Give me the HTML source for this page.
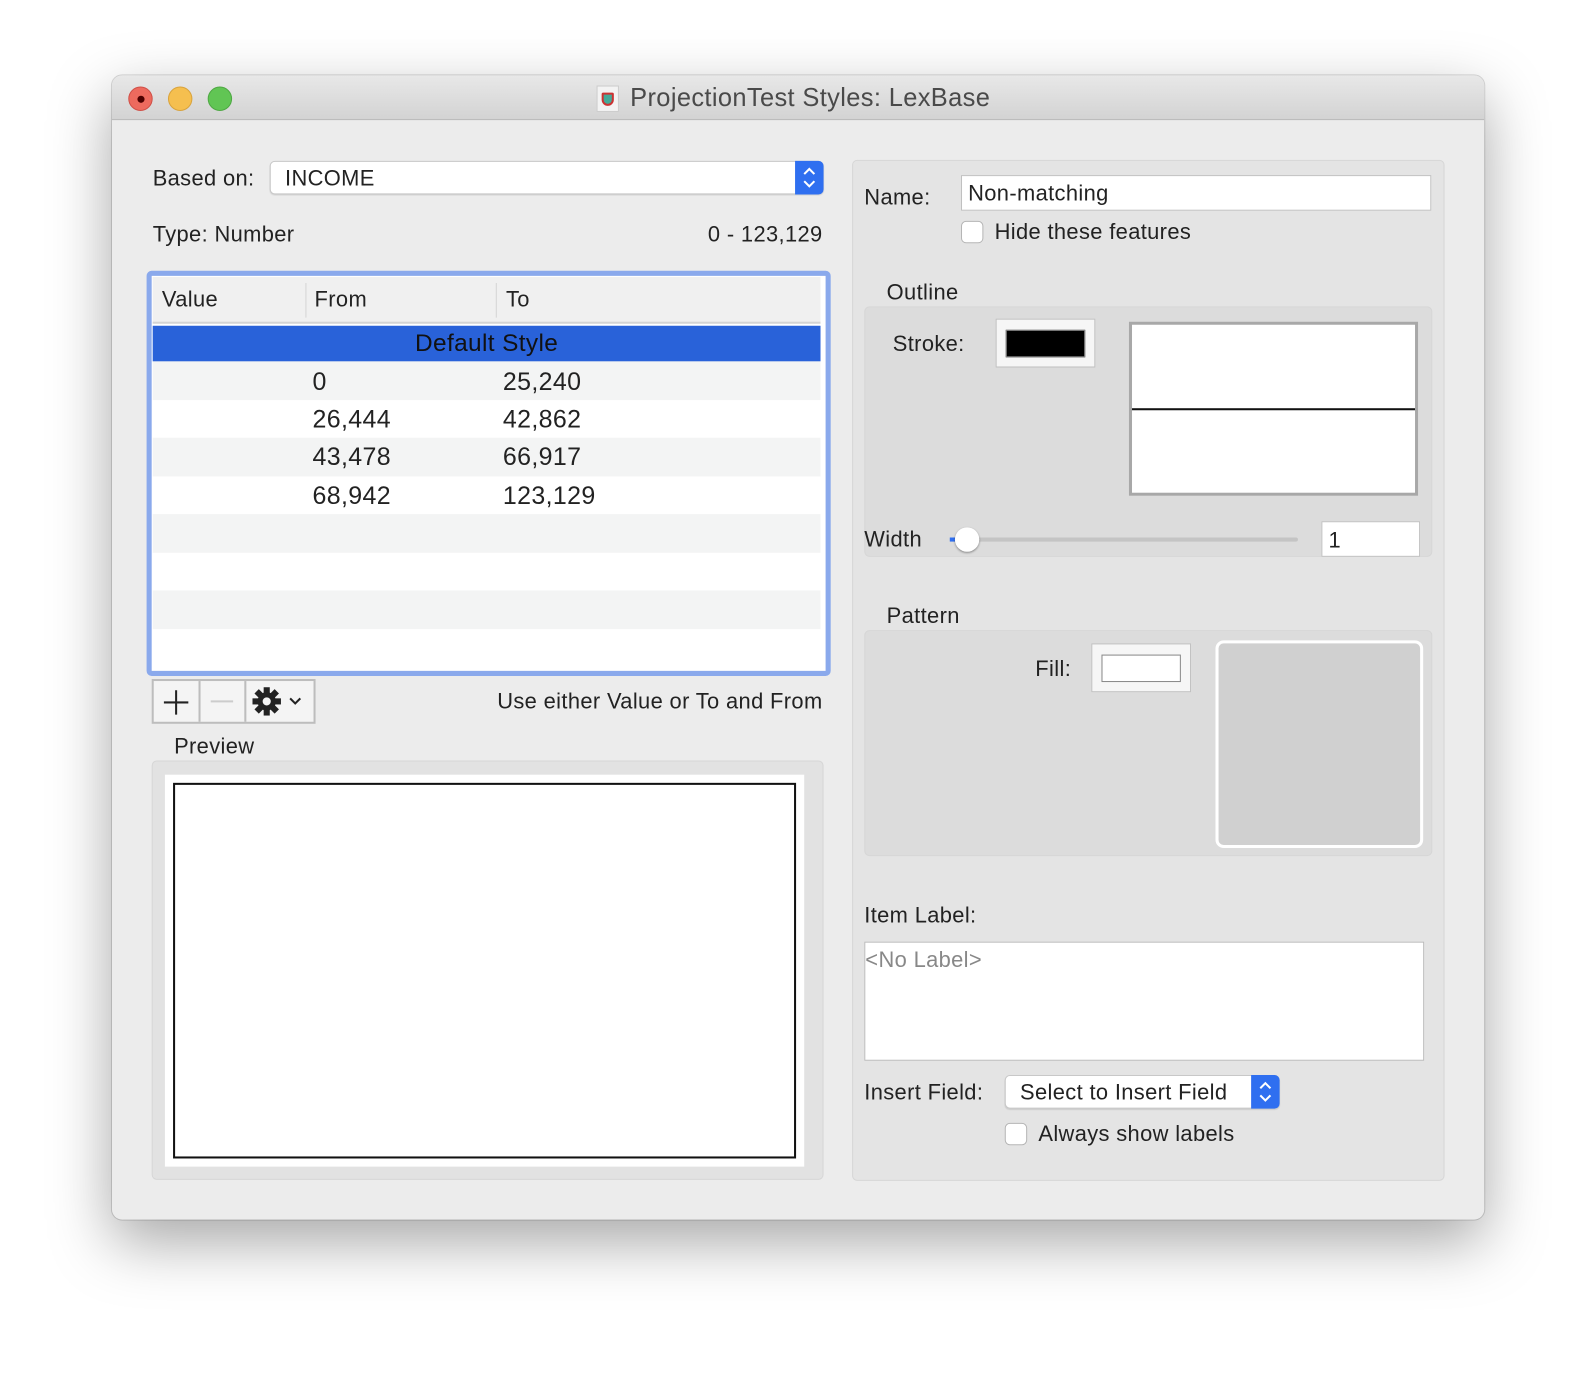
<!DOCTYPE html>
<html><head><style>
*{box-sizing:border-box;margin:0;padding:0}
body{width:1596px;height:1368px;background:#fff;font-family:"Liberation Sans",sans-serif;font-size:21.5px;letter-spacing:0.35px;color:#222;position:relative;overflow:hidden}
#wrap{position:absolute;left:0;top:0;width:1596px;height:1368px;transform:scale(1.018);transform-origin:0 0}
.a{position:absolute}
.win{left:110px;top:74px;width:1348px;height:1124px;background:#ececec;border-radius:10px;box-shadow:0 22px 60px rgba(0,0,0,.35),0 0 0 1px rgba(0,0,0,.15);overflow:hidden}
.tb{left:0;top:0;width:100%;height:44px;background:linear-gradient(#e8e8e8,#d3d3d3);border-bottom:1px solid #b8b8b8}
.dot{width:24px;height:24px;border-radius:50%;top:11px}
.t{white-space:nowrap}
.box{background:#e2e2e2;border:1px solid #d6d6d6;border-radius:5px}
.row{left:0;width:656px;height:37.5px}
.cb{width:22px;height:22px;border:1px solid #b5b5b5;border-radius:5px;background:#fff}
.st{right:-1px;top:-1px;width:28px;height:33px;background:#2f6ff0;border-radius:0 5px 5px 0}
</style></head><body><div id="wrap">
<div class="a win">
 <div class="a tb">
  <div class="a dot" style="left:16px;background:#ed6a5e;border:1px solid #d05048"><div class="a" style="left:8px;top:8px;width:7px;height:7px;border-radius:50%;background:#4d0000"></div></div>
  <div class="a dot" style="left:55px;background:#f5bf4f;border:1px solid #d9a33c"></div>
  <div class="a dot" style="left:94px;background:#61c554;border:1px solid #4ea843"></div>
  <div class="a" style="left:476px;top:10px;width:22px;height:26px;background:#f3f3f3;border:1px solid #ccc"><div class="a" style="left:4px;top:6px;width:12px;height:13px;border-radius:2px 2px 8px 8px;background:#4a9;border:2px solid #c33"></div></div>
  <div class="a t" style="left:509px;top:8px;font-size:25px;color:#4a4a4a">ProjectionTest Styles: LexBase</div>
 </div>
 <div class="a t" style="left:40px;top:89px">Based on:</div>
 <div class="a" style="left:155px;top:84px;width:544px;height:33px;background:#fff;border:1px solid #c8c8c8;border-radius:5px;box-shadow:0 1px 1px rgba(0,0,0,.1)"><div class="a t" style="left:14px;top:4px">INCOME</div>
  <div class="a st"><svg width="28" height="33"><path d="M9 13l5-5 5 5M9 20l5 5 5-5" stroke="#fff" stroke-width="2" fill="none"/></svg></div></div>
 <div class="a t" style="left:40px;top:144px">Type: Number</div>
 <div class="a t" style="right:650px;top:144px">0 - 123,129</div>
 <div class="a" style="left:34px;top:192px;width:672px;height:398px;border:5px solid #8aa9ec;border-radius:5px;background:#fff">
  <div class="a" style="left:1px;top:1px;width:656px;height:46px;background:#f0f0f0;border-bottom:2px solid #d4d4d4">
   <div class="a t" style="left:9px;top:10px">Value</div>
   <div class="a" style="left:150px;top:6px;width:1px;height:34px;background:#d4d4d4"></div>
   <div class="a t" style="left:159px;top:10px">From</div>
   <div class="a" style="left:337px;top:6px;width:1px;height:34px;background:#d4d4d4"></div>
   <div class="a t" style="left:347px;top:10px">To</div>
  </div>
  <div class="a" style="left:1px;top:49px;width:656px;height:35px;background:#2962d9;text-align:center;font-size:24px;color:#111;line-height:36px">Default Style</div>
  <div class="a" style="left:1px;top:84px;width:656px;font-size:24.5px">
   <div class="a row" style="top:0;background:#f3f4f4"><span class="a" style="left:157px;top:7px">0</span><span class="a" style="left:344px;top:7px">25,240</span></div>
   <div class="a row" style="top:37.5px"><span class="a" style="left:157px;top:6px">26,444</span><span class="a" style="left:344px;top:6px">42,862</span></div>
   <div class="a row" style="top:75px;background:#f3f4f4"><span class="a" style="left:157px;top:6px">43,478</span><span class="a" style="left:344px;top:6px">66,917</span></div>
   <div class="a row" style="top:112.5px"><span class="a" style="left:157px;top:6px">68,942</span><span class="a" style="left:344px;top:6px">123,129</span></div>
   <div class="a row" style="top:150px;background:#f3f4f4"></div>
   <div class="a row" style="top:225px;background:#f3f4f4"></div>
  </div>
 </div>
 <div class="a" style="left:39px;top:593px;width:161px;height:44px;border:2px solid #bdbdbd;background:#f4f4f4">
  <div class="a" style="left:44px;top:0;width:2px;height:40px;background:#bdbdbd"></div>
  <div class="a" style="left:89px;top:0;width:2px;height:40px;background:#bdbdbd"></div>
  <svg class="a" style="left:9px;top:8px" width="26" height="26"><path d="M13 1v24M1 13h24" stroke="#222" stroke-width="2"/></svg>
  <div class="a" style="left:56px;top:19px;width:22px;height:2px;background:#ccc"></div>
  <svg class="a" style="left:97px;top:6px" width="28" height="28" viewBox="0 0 28 28"><g fill="#222"><circle cx="14" cy="14" r="9"/><rect x="11" y="0" width="6" height="28"/><rect x="11" y="0" width="6" height="28" transform="rotate(45 14 14)"/><rect x="11" y="0" width="6" height="28" transform="rotate(90 14 14)"/><rect x="11" y="0" width="6" height="28" transform="rotate(135 14 14)"/></g><circle cx="14" cy="14" r="4" fill="#f4f4f4"/></svg>
  <svg class="a" style="left:132px;top:14px" width="14" height="12"><path d="M2 3l5 5 5-5" stroke="#222" stroke-width="2" fill="none"/></svg>
 </div>
 <div class="a t" style="right:650px;top:603px">Use either Value or To and From</div>
 <div class="a t" style="left:61px;top:647px">Preview</div>
 <div class="a box" style="left:39px;top:673px;width:660px;height:412px">
  <div class="a" style="left:12px;top:13px;width:628px;height:385px;background:#fff"><div class="a" style="left:8px;top:8px;width:612px;height:369px;border:2px solid #111"></div></div>
 </div>

 <div class="a box" style="left:727px;top:83px;width:582px;height:1003px;background:#e4e4e4">
  <div class="a t" style="left:11px;top:24px">Name:</div>
  <div class="a" style="left:106px;top:14px;width:462px;height:35px;background:#fff;border:1px solid #c0c0c0"><div class="a t" style="left:6px;top:5px">Non-matching</div></div>
  <div class="a cb" style="left:106px;top:59px"></div>
  <div class="a t" style="left:139px;top:58px">Hide these features</div>
  <div class="a t" style="left:33px;top:117px">Outline</div>
  <div class="a box" style="left:11px;top:143px;width:558px;height:246px;background:#dcdcdc">
   <div class="a t" style="left:27px;top:24px">Stroke:</div>
   <div class="a" style="left:128px;top:11px;width:98px;height:48px;background:#f6f6f6;border:1px solid #c0c0c0"><div class="a" style="left:9px;top:10px;width:78px;height:27px;background:#000;border:1px solid #888"></div></div>
   <div class="a" style="left:259px;top:14px;width:284px;height:171px;background:#fff;border:3px solid #a8a8a8"><div class="a" style="left:0;top:82px;width:278px;height:2px;background:#111"></div></div>
   <div class="a" style="left:83px;top:226px;width:342px;height:4px;background:#c4c4c4;border-radius:2px"><div class="a" style="left:0;top:0;width:16px;height:4px;background:#2f6ff0"></div></div>
   <div class="a" style="left:88px;top:216px;width:24px;height:24px;border-radius:50%;background:#fff;box-shadow:0 1px 2px rgba(0,0,0,.4)"></div>
   <div class="a" style="left:448px;top:210px;width:97px;height:35px;background:#fff;border:1px solid #c0c0c0"><div class="a t" style="left:6px;top:6px">1</div></div>
  </div>
  <div class="a t" style="left:11px;top:360px">Width</div>
  <div class="a t" style="left:33px;top:435px">Pattern</div>
  <div class="a box" style="left:11px;top:461px;width:558px;height:222px;background:#dcdcdc">
   <div class="a t" style="left:167px;top:25px">Fill:</div>
   <div class="a" style="left:222px;top:12px;width:98px;height:48px;background:#f6f6f6;border:1px solid #c0c0c0"><div class="a" style="left:9px;top:10px;width:78px;height:27px;background:#fff;border:1px solid #888"></div></div>
   <div class="a" style="left:344px;top:9px;width:204px;height:204px;background:#d0d0d0;border:3px solid #fff;border-radius:8px"></div>
  </div>
  <div class="a t" style="left:11px;top:729px">Item Label:</div>
  <div class="a" style="left:11px;top:767px;width:550px;height:117px;background:#fff;border:1px solid #bbb"><div class="a t" style="left:0;top:5px;color:#888">&lt;No Label&gt;</div></div>
  <div class="a t" style="left:11px;top:903px">Insert Field:</div>
  <div class="a" style="left:149px;top:898px;width:270px;height:33px;background:#fff;border:1px solid #c8c8c8;border-radius:5px;box-shadow:0 1px 1px rgba(0,0,0,.1)"><div class="a t" style="left:14px;top:4px">Select to Insert Field</div>
   <div class="a st"><svg width="28" height="33"><path d="M9 13l5-5 5 5M9 20l5 5 5-5" stroke="#fff" stroke-width="2" fill="none"/></svg></div></div>
  <div class="a cb" style="left:149px;top:945px"></div>
  <div class="a t" style="left:182px;top:944px">Always show labels</div>
 </div>
</div>
</div></body></html>
